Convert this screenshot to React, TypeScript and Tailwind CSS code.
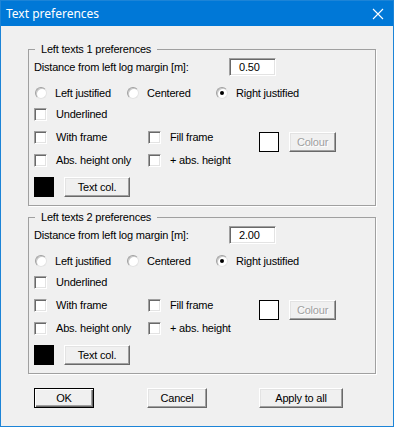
import React from 'react';

// classic win32 bevels
const SUNKEN =
  'border border-t-[#a0a0a0] border-l-[#a0a0a0] border-r-white border-b-white shadow-[inset_1px_1px_0_#696969,inset_-1px_-1px_0_#e3e3e3] bg-white';
const RAISED =
  'bg-[#f0f0f0] border border-t-white border-l-white border-r-[#696969] border-b-[#696969] shadow-[inset_-1px_-1px_0_#a0a0a0,inset_1px_1px_0_#e3e3e3]';

function Check({ label, width }: { label: string; width: string }) {
  return (
    <div className={`flex items-center h-[16px] ${width}`}>
      <div className={`w-[13px] h-[13px] shrink-0 ${SUNKEN}`} />
      <span className="ml-[9px] whitespace-nowrap">{label}</span>
    </div>
  );
}

function Radio({ label, checked, width }: { label: string; checked?: boolean; width: string }) {
  return (
    <div className={`flex items-center h-[16px] ${width}`}>
      <div className="ml-[1px] w-[12px] h-[12px] shrink-0 rounded-full bg-white border border-t-[#a0a0a0] border-l-[#a0a0a0] border-r-[#e3e3e3] border-b-[#e3e3e3] shadow-[inset_1px_1px_0_#c8c8c8] flex items-center justify-center">
        {checked && <div className="w-[4px] h-[4px] rounded-full bg-black" />}
      </div>
      <span className="ml-[8px] whitespace-nowrap">{label}</span>
    </div>
  );
}

function Btn({ label, width, isDefault, disabled }: { label: string; width: string; isDefault?: boolean; disabled?: boolean }) {
  if (isDefault) {
    return (
      <div
        className={`${width} h-[20px] flex items-center justify-center bg-[#f0f0f0] border border-black shadow-[inset_1px_1px_0_#fff,inset_-1px_-1px_0_#696969,inset_-2px_-2px_0_#a0a0a0]`}
      >
        {label}
      </div>
    );
  }
  return (
    <div
      className={`${width} h-[20px] flex items-center justify-center ${RAISED} ${
        disabled ? 'text-[#a0a0a0] [text-shadow:1px_1px_0_#fff]' : ''
      }`}
    >
      {label}
    </div>
  );
}

function PrefGroup({ title, distance }: { title: string; distance: string }) {
  return (
    <fieldset className="w-[348px] border border-[#a0a0a0] shadow-[1px_1px_0_#fff] px-[5px] pb-[8px]">
      <legend className="ml-[1px] px-[6px] leading-[13px]">{title}</legend>
      <div className="mt-[2px] flex items-center h-[18px]">
        <span className="w-[195px] whitespace-nowrap">Distance from left log margin [m]:</span>
        <div className={`w-[47px] h-[18px] flex items-center pl-[9px] ${SUNKEN}`}>{distance}</div>
      </div>
      <div className="mt-[9px] flex">
        <Radio label="Left justified" width="w-[92px]" />
        <Radio label="Centered" width="w-[89px]" />
        <Radio label="Right justified" width="w-[120px]" checked />
      </div>
      <div className="mt-[5px]">
        <Check label="Underlined" width="w-[120px]" />
      </div>
      <div className="mt-[7px] flex">
        <div className="flex flex-col gap-[7px] w-[225px]">
          <div className="flex">
            <Check label="With frame" width="w-[114px]" />
            <Check label="Fill frame" width="w-[111px]" />
          </div>
          <div className="flex">
            <Check label="Abs. height only" width="w-[114px]" />
            <Check label="+ abs. height" width="w-[111px]" />
          </div>
        </div>
        <div className="mt-[3px] flex items-start">
          <div className="w-[20px] h-[20px] bg-white border border-black" />
          <div className="ml-[10px]">
            <Btn label="Colour" width="w-[47px]" disabled />
          </div>
        </div>
      </div>
      <div className="mt-[9px] flex items-center h-[20px]">
        <div className="w-[20px] h-[20px] bg-black" />
        <div className="ml-[10px]">
          <Btn label="Text col." width="w-[66px]" />
        </div>
      </div>
    </fieldset>
  );
}

export default function App() {
  return (
    <div className="w-[394px] h-[427px] border border-[#1c84d7] bg-[#f0f0f0] flex flex-col font-['Liberation_Sans',Arial,sans-serif] text-[11px] tracking-[-0.2px] text-black overflow-hidden">
      <div className="h-[25px] shrink-0 bg-[#0078d7] flex items-center justify-between pl-[5px] pr-[8px] text-white tracking-normal">
        <span className="font-['Noto_Sans',sans-serif] text-[12px]">Text preferences</span>
        <svg width="12" height="12" viewBox="0 0 12 12" className="mr-[1px]">
          <path d="M1 1L11 11M11 1L1 11" stroke="#fff" strokeWidth="1.1" fill="none" />
        </svg>
      </div>
      <div className="pl-[27px] pt-[17px] flex flex-col">
        <PrefGroup title="Left texts 1 preferences" distance="0.50" />
        <div className="mt-[5px]">
          <PrefGroup title="Left texts 2 preferences" distance="2.00" />
        </div>
        <div className="mt-[14px] flex pl-[6px]">
          <Btn label="OK" width="w-[60px]" isDefault />
          <div className="ml-[53px]">
            <Btn label="Cancel" width="w-[60px]" />
          </div>
          <div className="ml-[52px]">
            <Btn label="Apply to all" width="w-[84px]" />
          </div>
        </div>
      </div>
    </div>
  );
}
